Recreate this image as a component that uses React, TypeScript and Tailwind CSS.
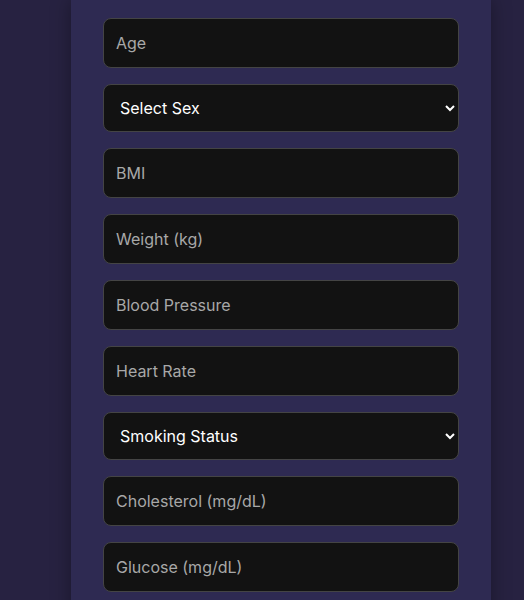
import React from 'react'

type Field =
  | { kind: 'input'; label: string }
  | { kind: 'select'; label: string; options: string[] }

const fields: Field[] = [
  { kind: 'input', label: 'Age' },
  { kind: 'select', label: 'Select Sex', options: ['Male', 'Female'] },
  { kind: 'input', label: 'BMI' },
  { kind: 'input', label: 'Weight (kg)' },
  { kind: 'input', label: 'Blood Pressure' },
  { kind: 'input', label: 'Heart Rate' },
  { kind: 'select', label: 'Smoking Status', options: ['Never', 'Former', 'Current'] },
  { kind: 'input', label: 'Cholesterol (mg/dL)' },
  { kind: 'input', label: 'Glucose (mg/dL)' },
]

export default function App() {
  return (
    <div
      className="min-h-screen bg-[#272241] flex pl-[71px]"
      style={{ fontFamily: 'Inter, "Noto Sans", sans-serif' }}
    >
      <div className="w-[420px] bg-[#2e2a52] px-8 pt-[18px] pb-10 shadow-[0_0_18px_rgba(0,0,0,0.35)]">
        <form className="flex flex-col gap-4" onSubmit={e => e.preventDefault()}>
          {fields.map(f =>
            f.kind === 'input' ? (
              <input
                key={f.label}
                type="text"
                placeholder={f.label}
                className="w-full h-[50px] px-3 rounded-lg bg-[#121212] border border-[#444] text-white text-base placeholder:text-[#a8a8a8] outline-none"
              />
            ) : (
              <select
                key={f.label}
                defaultValue=""
                className="w-full h-[48px] px-3 rounded-lg bg-[#121212] border border-[#444] text-white text-base outline-none [color-scheme:dark]"
              >
                <option value="" disabled>
                  {f.label}
                </option>
                {f.options.map(o => (
                  <option key={o}>{o}</option>
                ))}
              </select>
            ),
          )}
        </form>
      </div>
    </div>
  )
}
